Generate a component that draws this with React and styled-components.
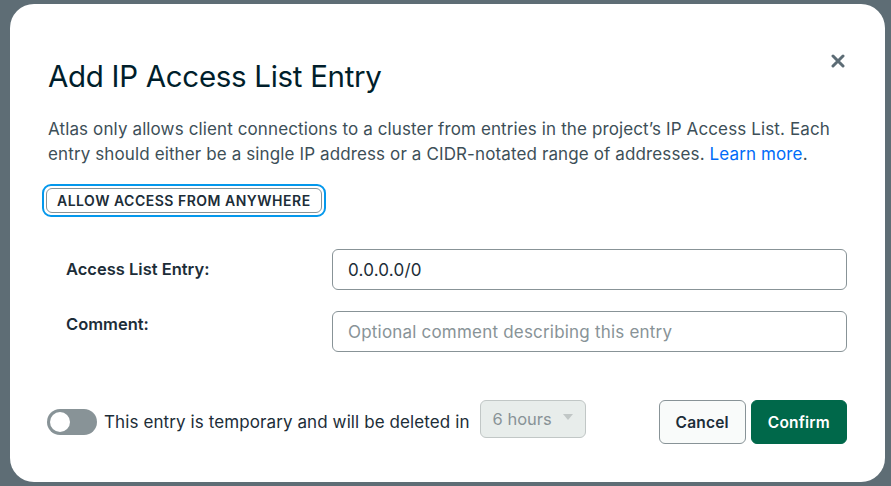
import React, { useState } from "react";
import styled, { createGlobalStyle } from "styled-components";

// IP access list modal, drawn over a dimmed page

const GlobalStyle = createGlobalStyle`
  html, body {
    margin: 0;
    padding: 0;
    background: #5e6d75;
    font-family: "Inter", "Noto Sans", sans-serif;
  }
`;

const Backdrop = styled.div`
  width: 891px;
  height: 486px;
  display: flex;
  align-items: flex-start;
  padding: 4px 0 0 10px;
  box-sizing: border-box;
  overflow: hidden;
`;

const Modal = styled.div`
  width: 875px;
  height: 478px;
  background: #ffffff;
  border-radius: 24px;
  box-sizing: border-box;
  padding: 54px 38px 38px 38px;
  display: flex;
  flex-direction: column;
  position: relative;
  color: #1c2d38;
`;

const Title = styled.h2`
  margin: 0;
  font-size: 29.5px;
  line-height: 36px;
  font-weight: 400;
  letter-spacing: -0.3px;
  color: #001e2b;
`;

const CloseButton = styled.button`
  position: absolute;
  top: 44px;
  right: 34px;
  width: 26px;
  height: 26px;
  border: none;
  background: transparent;
  padding: 0;
  display: flex;
  align-items: center;
  justify-content: center;
  cursor: pointer;
`;

const Description = styled.p`
  margin: 23px 0 0 0;
  font-size: 17px;
  line-height: 25px;
  letter-spacing: 0.12px;
  color: #3d4f58;
`;

const Link = styled.a`
  color: #016bf8;
  text-decoration: none;
`;

const FocusRing = styled.div`
  margin-top: 17px;
  align-self: flex-start;
  margin-left: -6px;
  padding: 2px;
  border: 2px solid #0498ec;
  border-radius: 9px;
  display: flex;
`;

const OutlineButton = styled.button`
  height: 25px;
  padding: 0 10px;
  border: 1px solid #889397;
  border-radius: 6px;
  background: #ffffff;
  font-family: inherit;
  font-size: 14px;
  font-weight: 600;
  letter-spacing: 0.5px;
  color: #1c2d38;
  cursor: pointer;
`;

const Form = styled.div`
  margin-top: 32px;
  display: flex;
  flex-direction: column;
  gap: 21px;
`;

const Row = styled.div`
  display: grid;
  grid-template-columns: 284px 1fr;
  align-items: ${(p) => (p.top ? "start" : "center")};
`;

const Label = styled.label`
  padding-left: 18px;
  font-size: 16.5px;
  font-weight: 600;
  color: #1c2d38;
  margin-top: ${(p) => (p.top ? "3px" : "-2px")};
`;

const Input = styled.input`
  height: 41px;
  box-sizing: border-box;
  border: 1px solid #889397;
  border-radius: 6px;
  padding: 0 15px;
  font-family: inherit;
  font-size: 17px;
  letter-spacing: 0.2px;
  color: #1c2d38;
  outline: none;

  &::placeholder {
    color: #889397;
  }
`;

const Footer = styled.div`
  margin-top: auto;
  display: flex;
  align-items: center;
  gap: 10px;
`;

const Toggle = styled.button`
  width: 50px;
  height: 26px;
  border-radius: 13px;
  border: none;
  padding: 0;
  background: ${(p) => (p.on ? "#00a35c" : "#889397")};
  position: relative;
  cursor: pointer;
  flex-shrink: 0;
  margin-left: -1px;
`;

const Knob = styled.span`
  position: absolute;
  top: 3px;
  left: ${(p) => (p.on ? "27px" : "3px")};
  width: 20px;
  height: 20px;
  border-radius: 50%;
  background: #ffffff;
`;

const ToggleText = styled.span`
  margin-left: -3px;
  font-size: 17px;
  letter-spacing: 0.1px;
  color: #1c2d38;
`;

const Select = styled.div`
  width: 106px;
  height: 38px;
  box-sizing: border-box;
  border: 1px solid #c1c7c6;
  border-radius: 6px;
  background: #e8edeb;
  display: flex;
  align-items: center;
  justify-content: space-between;
  padding: 0 12px;
  font-size: 16.5px;
  color: #889397;
  margin-top: -6px;
`;

const Caret = styled.span`
  width: 0;
  height: 0;
  border-left: 5px solid transparent;
  border-right: 5px solid transparent;
  border-top: 6px solid #c1c7c6;
  margin-top: -4px;
`;

const Actions = styled.div`
  margin-left: auto;
  display: flex;
  gap: 5px;
`;

const ActionButton = styled.button`
  height: 44px;
  box-sizing: border-box;
  padding: 0 16px;
  border-radius: 6px;
  border: 1px solid ${(p) => (p.primary ? "#00684a" : "#889397")};
  background: ${(p) => (p.primary ? "#00684a" : "#f9fbfa")};
  color: ${(p) => (p.primary ? "#ffffff" : "#1c2d38")};
  font-family: inherit;
  font-size: 15.5px;
  font-weight: 600;
  letter-spacing: 0.2px;
  cursor: pointer;
`;

const App = () => {
  const [temporary, setTemporary] = useState(false);

  return (
    <>
      <GlobalStyle />
      <Backdrop>
        <Modal>
          <CloseButton aria-label="Close">
            <svg width="14" height="14" viewBox="0 0 14 14">
              <path
                d="M2 2 L12 12 M12 2 L2 12"
                stroke="#5c6c75"
                strokeWidth="3"
                strokeLinecap="round"
              />
            </svg>
          </CloseButton>
          <Title>Add IP Access List Entry</Title>
          <Description>
            Atlas only allows client connections to a cluster from entries in
            the project’s IP Access List. Each
            <br />
            entry should either be a single IP address or a CIDR-notated range
            of addresses. <Link href="#">Learn more</Link>.
          </Description>
          <FocusRing>
            <OutlineButton>ALLOW ACCESS FROM ANYWHERE</OutlineButton>
          </FocusRing>
          <Form>
            <Row>
              <Label>Access List Entry:</Label>
              <Input defaultValue="0.0.0.0/0" />
            </Row>
            <Row top>
              <Label top>Comment:</Label>
              <Input placeholder="Optional comment describing this entry" />
            </Row>
          </Form>
          <Footer>
            <Toggle on={temporary} onClick={() => setTemporary(!temporary)}>
              <Knob on={temporary} />
            </Toggle>
            <ToggleText>
              This entry is temporary and will be deleted in
            </ToggleText>
            <Select>
              6 hours
              <Caret />
            </Select>
            <Actions>
              <ActionButton>Cancel</ActionButton>
              <ActionButton primary>Confirm</ActionButton>
            </Actions>
          </Footer>
        </Modal>
      </Backdrop>
    </>
  );
};

export default App;
